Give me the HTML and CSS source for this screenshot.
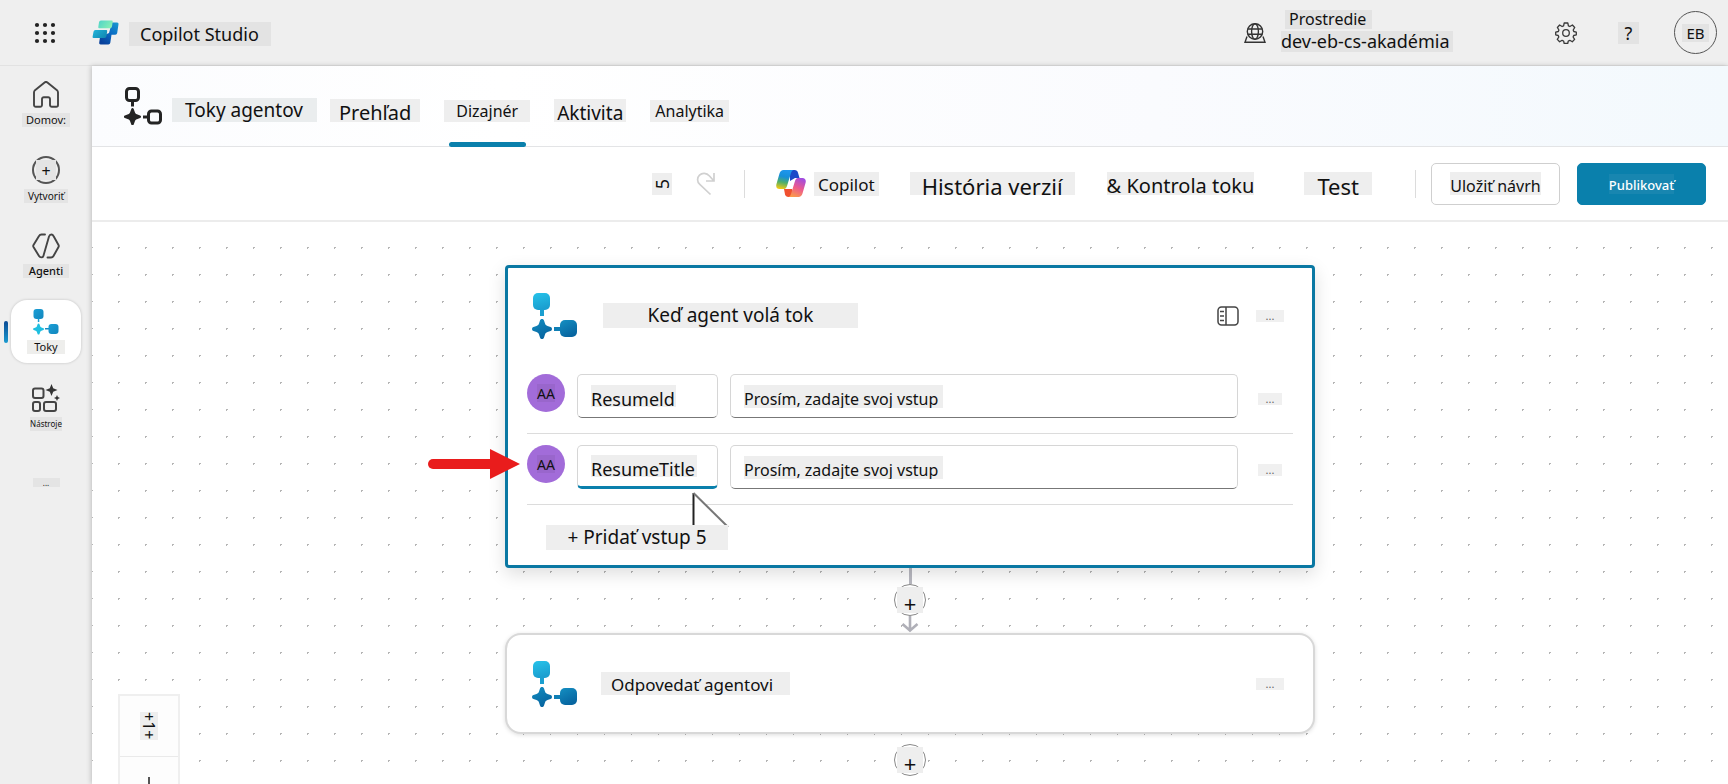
FILE: index.html
```html
<!DOCTYPE html>
<html lang="sk">
<head>
<meta charset="utf-8">
<meta name="viewport" content="width=device-width, initial-scale=1">
<title>Copilot Studio</title>
<link rel="stylesheet" href="styles.css">
</head>
<body>
<svg class="defs" aria-hidden="true">
  <defs>
    <linearGradient id="flow-light" x1="0" y1="0" x2="0.3" y2="1"><stop offset="0" stop-color="#26c3ea"/><stop offset="1" stop-color="#1b9fd0"/></linearGradient>
    <linearGradient id="flow-dark" x1="0" y1="0" x2="0.5" y2="1"><stop offset="0" stop-color="#148fc2"/><stop offset="1" stop-color="#0765a0"/></linearGradient>
    <linearGradient id="rail-blue" x1="0" y1="0" x2="1" y2="1"><stop offset="0" stop-color="#1b9fd6"/><stop offset="1" stop-color="#1286bd"/></linearGradient>
    <symbol id="flow-node" viewBox="0 0 46 46">
      <rect x="1" y="0" width="17" height="17" rx="5" fill="url(#flow-light)"/>
      <path d="M8 16h4v7H8z" fill="#1b9fd0"/>
      <path d="M22 34h7v4h-7z" fill="#0f7fb5"/>
      <rect x="28" y="27" width="17" height="17" rx="5" fill="url(#flow-dark)"/>
      <path d="M10 26c1 0 1.700.5 2 1.500l1 3c.5 1.400 1.100 2 2.500 2.500l3 1c2 .7 2 3.300 0 4l-3 1c-1.400.5-2 1.100-2.500 2.500l-1 3c-.7 2-3.300 2-4 0l-1-3c-.5-1.400-1.100-2-2.500-2.500l-3-1c-2-.7-2-3.300 0-4l3-1c1.400-.5 2-1.100 2.500-2.500l1-3c.3-1 1-1.500 2-1.500z" fill="url(#flow-dark)"/>
    </symbol>
  </defs>
</svg>

<header class="topbar">
  <button class="icon-btn waffle" aria-label="Spúšťač aplikácií">
    <svg width="22" height="22" viewBox="0 0 22 22" fill="#222"><circle cx="3" cy="3" r="2.100"/><circle cx="11" cy="3" r="2.100"/><circle cx="19" cy="3" r="2.100"/><circle cx="3" cy="11" r="2.100"/><circle cx="11" cy="11" r="2.100"/><circle cx="19" cy="11" r="2.100"/><circle cx="3" cy="19" r="2.100"/><circle cx="11" cy="19" r="2.100"/><circle cx="19" cy="19" r="2.100"/></svg>
  </button>
  <svg class="logo" width="28" height="26" viewBox="0 0 28 26">
    <defs>
      <linearGradient id="lg-a" x1="0" y1="0" x2="1" y2="0.400"><stop offset="0" stop-color="#4fd3c9"/><stop offset="1" stop-color="#84eeb6"/></linearGradient>
      <linearGradient id="lg-b" x1="0" y1="0" x2="1" y2="0.600"><stop offset="0" stop-color="#22b4da"/><stop offset="1" stop-color="#128cb4"/></linearGradient>
      <linearGradient id="lg-c" x1="1" y1="0" x2="0.300" y2="1"><stop offset="0" stop-color="#1a9bd0"/><stop offset="0.500" stop-color="#0a6cc4"/><stop offset="1" stop-color="#08419c"/></linearGradient>
    </defs>
    <path d="M20 2.500h5a1.500 1.500 0 0 1 1.500 1.800l-1.300 8.700a2 2 0 0 1-2 1.700h-3.700l-1.200 8.100a2 2 0 0 1-2 1.700H8.700a1.500 1.500 0 0 1-1.500-1.800L8 17l9-4z" fill="url(#lg-c)"/>
    <path d="M3.500 10h10.700a1 1 0 0 1 1 1.200l-.8 5.100a2 2 0 0 1-2 1.700H1.600a1 1 0 0 1-1-1.200l.9-5.100a2 2 0 0 1 2-1.700z" fill="url(#lg-b)"/>
    <path d="M9 .5h10.700a1 1 0 0 1 1 1.200l-.7 4.900A2 2 0 0 1 18 8.300H7.300a1 1 0 0 1-1-1.200L7 2.200A2 2 0 0 1 9 .5z" fill="url(#lg-a)"/>
  </svg>
  <span class="tag tall brand">Copilot Studio</span>
  <svg class="globe" width="22" height="20" viewBox="0 0 22 20" fill="none" stroke="#333" stroke-width="1.400"><circle cx="11" cy="8.500" r="7.700"/><ellipse cx="11" cy="8.500" rx="3.400" ry="7.700"/><path d="M3.800 6h14.400M3.800 11.200h14.400M3 13.500 1 19.200h20l-2-5.700"/></svg>
  <div class="env">
    <span class="tag env-label">Prostredie</span>
    <span class="tag env-name">dev-eb-cs-akadémia</span>
  </div>
  <button class="icon-btn gear" aria-label="Nastavenia">
    <svg width="22" height="22" viewBox="0 0 22 22" fill="none" stroke="#3a3a3a" stroke-width="1.300" stroke-linejoin="round"><circle cx="11" cy="11" r="3.300"/><path d="M9.200 1h3.600l.6 2.800 1.500.7 2.500-1.500 2.300 2.500-1.500 2.500.6 1.500 2.500.6v2.700l-2.600.7-.6 1.500 1.500 2.400-2.300 2.400-2.500-1.500-1.500.7-.6 2.500H9.200l-.6-2.500-1.500-.7-2.500 1.500-2.300-2.400L3.800 15l-.6-1.500-2.500-.7v-2.700l2.600-.6.6-1.500-1.500-2.500L4.600 3l2.500 1.500 1.500-.7z"/></svg>
  </button>
  <button class="tag help" aria-label="Pomocník">?</button>
  <button class="avatar"><span class="tag initials">EB</span></button>
</header>

<div class="shell">
  <nav class="rail">
    <a class="rail-item" href="#">
      <svg width="26" height="27" viewBox="0 0 26 27" fill="none" stroke="#444" stroke-width="1.900" stroke-linejoin="round"><path d="M1 11.500c0-.9.400-1.700 1-2.300L11.600 1.500a2.200 2.200 0 0 1 2.800 0L24 9.200c.6.600 1 1.400 1 2.300V24a1.800 1.800 0 0 1-1.800 1.800h-4.400A1.800 1.800 0 0 1 17 24v-6a1.800 1.800 0 0 0-1.800-1.800h-4.400A1.800 1.800 0 0 0 9 18v6a1.800 1.800 0 0 1-1.800 1.800H2.800A1.800 1.800 0 0 1 1 24z"/></svg>
      <span class="tag rail-label">Domov:</span>
    </a>
    <a class="rail-item" href="#">
      <span class="create"><span class="tag create-plus">+</span></span>
      <span class="tag rail-label small">Vytvoriť</span>
    </a>
    <a class="rail-item" href="#">
      <svg width="28" height="26" viewBox="0 0 28 26" fill="none" stroke="#444" stroke-width="1.900" stroke-linejoin="round" stroke-linecap="round"><path d="M13 1.500H9.500A3 3 0 0 0 7 3L1.500 12a2 2 0 0 0 0 2L7 23a3 3 0 0 0 2.300 1.400c1 0 1.800-.5 2.100-1.500L17 3.500c.5-1.300 1.300-2 2.300-2s1.700.5 2.200 1.500L26.500 12a2 2 0 0 1 0 2L21.500 23a3 3 0 0 1-2.500 1.500h-3.500"/></svg>
      <span class="tag rail-label strong">Agenti</span>
    </a>
    <a class="rail-item current" href="#" aria-current="page">
      <svg width="26" height="26" viewBox="0 0 26 26" fill="url(#rail-blue)"><rect x="0.500" y="0" width="10" height="10" rx="3"/><path d="M4.800 9.500h1.500V13H4.800zM12 19h4.500v1.500H12z"/><rect x="15.500" y="15" width="10" height="10" rx="3"/><path d="M5.500 14.500c.5 0 .8.300 1 .8l.7 1.900c.3.800.5 1 1.300 1.300l1.900.7c.9.300.9 1.500 0 1.800l-1.900.7c-.8.300-1 .6-1.300 1.300l-.7 1.900c-.3.900-1.600.9-1.900 0L3.900 23c-.3-.8-.6-1-1.300-1.300L.7 21c-.9-.3-.9-1.500 0-1.800l1.900-.7c.8-.3 1-.6 1.300-1.300l.7-1.900c.2-.5.5-.8.9-.8z" fill="#1fbfe0"/></svg>
      <span class="tag rail-label">Toky</span>
    </a>
    <a class="rail-item" href="#">
      <svg width="28" height="28" viewBox="0 0 28 28" fill="none" stroke="#444" stroke-width="2"><rect x="1" y="4.500" width="10.500" height="9.500" rx="2"/><rect x="1" y="18" width="7" height="9" rx="2"/><rect x="12" y="18" width="12" height="9" rx="2"/><path d="M19.500 0l1.700 4.300 4.300 1.700-4.300 1.700-1.700 4.300-1.700-4.300L13.500 6l4.300-1.700zM25 11l.9 2.100 2.100.9-2.100.9L25 17l-.9-2.100L22 14l2.100-.9z" fill="#333" stroke="none"/></svg>
      <span class="tag rail-label tiny">Nástroje</span>
    </a>
    <button class="tag rail-more" aria-label="Viac">...</button>
  </nav>

  <main class="main">
    <div class="pagehead">
      <svg width="38" height="38" viewBox="0 0 38 38" fill="none" stroke="#242424" stroke-width="3"><rect x="2.500" y="1.500" width="12" height="12" rx="3"/><path d="M8.500 13.500v6M19 30h5"/><rect x="24.500" y="24" width="12" height="12" rx="3"/><path d="M8.500 21c.6 0 1 .3 1.200 1l1.200 3.300c.4 1.100.9 1.600 2 2l3.200 1.200c1.300.5 1.300 2 0 2.500l-3.200 1.200c-1.100.4-1.600.9-2 2l-1.200 3.300c-.4 1.300-2 1.300-2.400 0l-1.200-3.300c-.4-1.100-.9-1.600-2-2L.9 31c-1.300-.5-1.300-2 0-2.500l3.200-1.200c1.100-.4 1.600-.9 2-2L7.300 22c.2-.7.6-1 1.200-1z" fill="#242424" stroke="none"/></svg>
      <h1 class="tag tall crumb">Toky agentov</h1>
      <nav class="tabs">
        <a class="tab" href="#"><span class="tag low tab-lg">Prehľad</span></a>
        <a class="tab active" href="#" aria-current="page"><span class="tag tab-sm">Dizajnér</span></a>
        <a class="tab" href="#"><span class="tag low tab-md">Aktivita</span></a>
        <a class="tab" href="#"><span class="tag tab-xs">Analytika</span></a>
      </nav>
    </div>

    <div class="toolbar">
      <button class="tag undo" aria-label="Späť"><span class="undo-glyph">5</span></button>
      <button class="icon-btn redo" aria-label="Znova"><svg width="20" height="24" viewBox="0 0 20 24" fill="none" stroke="#d0d0d0" stroke-width="1.700"><path d="M18 1v8h-8M17.500 8.500 13.500 4C10.500.7 6 .7 3.500 3.200S.8 9.500 3.800 12.300L14.500 22.500"/></svg></button>
      <span class="sep"></span>
      <button class="copilot">
        <svg width="30" height="27" viewBox="0 0 30 27">
          <defs>
            <linearGradient id="cp-a" x1="0.500" y1="0" x2="0.300" y2="1"><stop offset="0" stop-color="#1e96ee"/><stop offset="0.350" stop-color="#168fd8"/><stop offset="0.650" stop-color="#4fae6a"/><stop offset="1" stop-color="#f3c911"/></linearGradient>
            <linearGradient id="cp-b" x1="0.700" y1="0" x2="0.300" y2="1"><stop offset="0" stop-color="#a14de0"/><stop offset="0.500" stop-color="#ec5a8e"/><stop offset="1" stop-color="#fb9a4b"/></linearGradient>
          </defs>
          <path d="M14 0h4.500c2 0 3 1 3.500 2.800L23.500 8H19l-5 3z" fill="#1a49c8"/>
          <path d="M8 19h8l1.500 8h-5c-2 0-3-1-3.500-2.800z" fill="#f0502f"/>
          <path d="M7.500 0h10c-1.300.3-2 1.500-2.500 3l-4 13c-.8 2.500-1.800 3-4 3H3.500C1 19-.3 17 .4 14.200L3.500 3.500C4.200 1.200 5.500 0 7.500 0z" fill="url(#cp-a)"/>
          <path d="M22.500 27h-10c1.300-.3 2-1.500 2.500-3l4-13c.8-2.500 1.800-3 4-3h3.500c2.500 0 3.800 2 3.100 4.800L26.500 23.500c-.7 2.300-2 3.500-4 3.500z" fill="url(#cp-b)"/>
        </svg>
        <span class="tag copilot-text">Copilot</span>
      </button>
      <button class="tag low history">História verzií</button>
      <button class="tag low check">&amp; Kontrola toku</button>
      <button class="tag low test">Test</button>
      <span class="sep"></span>
      <button class="btn save"><span class="tag low btn-text">Uložiť návrh</span></button>
      <button class="btn primary"><span class="tag btn-text">Publikovať</span></button>
    </div>

    <section class="canvas">
      <article class="card selected">
        <div class="card-head">
          <svg width="46" height="46"><use href="#flow-node"/></svg>
          <h2 class="tag card-title wide">Keď agent volá tok</h2>
          <button class="icon-btn panel" aria-label="Panel"><svg width="22" height="20" viewBox="0 0 22 20" fill="none" stroke="#444" stroke-width="1.500"><rect x="1" y="1" width="20" height="18" rx="3.500"/><path d="M9 1v18M3 5.500h4M3 10h4M3 14.500h4"/></svg></button>
          <button class="tag more" aria-label="Viac možností">...</button>
        </div>
        <div class="row">
          <span class="type"><span class="tag type-text">AA</span></span>
          <label class="field name"><input class="tag low name-input short" value="Resumeld" aria-label="Názov vstupu"></label>
          <label class="field"><input class="tag low desc-input" placeholder="Prosím, zadajte svoj vstup" aria-label="Popis vstupu"></label>
          <button class="tag more" aria-label="Viac možností">...</button>
        </div>
        <div class="row">
          <span class="type"><span class="tag type-text">AA</span></span>
          <label class="field name focus"><input class="tag low name-input" value="ResumeTitle" aria-label="Názov vstupu"></label>
          <label class="field"><input class="tag low desc-input" placeholder="Prosím, zadajte svoj vstup" aria-label="Popis vstupu"></label>
          <button class="tag more" aria-label="Viac možností">...</button>
        </div>
        <button class="tag add">+ Pridať vstup 5</button>
        <svg class="pointer" width="38" height="36" viewBox="0 0 38 36"><path d="M1.500 1v33H37z" fill="#fff"/><path d="M1.500 33V1" stroke="#222" stroke-width="2"/><path d="M1.500 1 36 35" stroke="#777" stroke-width="2"/></svg>
        <svg class="arrow" width="92" height="30" viewBox="0 0 92 30" fill="#e91c1c"><rect x="0" y="10" width="70" height="10" rx="5"/><path d="M62 0v30l30-15z"/></svg>
      </article>

      <div class="link">
        <span class="line"></span>
        <button class="plus" aria-label="Pridať akciu"><span class="tag plus-text">+</span></button>
        <svg width="18" height="17" viewBox="0 0 18 17" fill="none" stroke="#b0b0b8" stroke-width="2.600"><path d="M9 0v14M1.500 8 9 14.500 16.500 8"/></svg>
      </div>

      <article class="card plain">
        <div class="card-head">
          <svg width="46" height="46"><use href="#flow-node"/></svg>
          <h2 class="tag card-title second">Odpovedať agentovi</h2>
          <button class="tag more" aria-label="Viac možností">...</button>
        </div>
      </article>
      <button class="plus last" aria-label="Pridať akciu"><span class="tag plus-text">+</span></button>

      <div class="zoom">
        <button class="zoom-btn" aria-label="Priblížiť"><span class="tag zoom-text">+1+</span></button>
        <button class="zoom-btn" aria-label="Oddialiť"><svg width="4" height="20" viewBox="0 0 4 20"><path d="M2 0v20" stroke="#555" stroke-width="2"/></svg></button>
      </div>
    </section>
  </main>
</div>
</body>
</html>
```
FILE: styles.css
```css
* { box-sizing: border-box; }

body {
  margin: 0;
  height: 100vh;
  display: flex;
  flex-direction: column;
  overflow: hidden;
  background: #efefef;
  color: #111;
  font-family: "Noto Sans", sans-serif;
}

button, input { font: inherit; color: inherit; border: 0; padding: 0; background: none; }
h1, h2 { margin: 0; font-weight: 400; }
a { color: inherit; text-decoration: none; }
svg { display: block; flex: none; }
.defs { position: absolute; width: 0; height: 0; }

/* grey plate behind a run of text */
.tag {
  display: block;
  flex: none;
  background: #eeeeee;
  line-height: 22px;
  white-space: nowrap;
  text-align: center;
}
.tag.tall { line-height: 24px; }
.tag.low { padding-top: 5px; line-height: 18px; }
.icon-btn { flex: none; }

/* top bar */
.topbar {
  display: flex;
  align-items: center;
  flex: none;
  height: 66px;
  padding: 0 11px 0 34px;
  border-bottom: 1px solid #e2e2e2;
}
.topbar .tag { background: #e3e3e3; }
.waffle { margin-right: 36px; }
.logo { margin-right: 9px; }
.brand { padding: 0 12px 0 11px; font-size: 18px; margin-top: 3px; }
.globe { margin-left: auto; margin-right: 15px; }
.env { display: flex; flex-direction: column; gap: 2px; width: 172px; margin-top: -4px; }
.env-label { align-self: flex-start; margin-left: 4px; padding: 0 6px 0 4px; font-size: 16px; line-height: 19px; }
.env-name { font-size: 18px; line-height: 21px; text-align: left; }
.gear { margin: 0 41px 0 102px; }
.help { width: 21px; font-size: 18px; margin-right: 35px; }
.avatar {
  display: flex;
  align-items: center;
  justify-content: center;
  width: 43px;
  height: 43px;
  border: 1px solid #555;
  border-radius: 50%;
}
.initials { padding: 0 4px; font-size: 15px; line-height: 18px; }

.shell { display: flex; flex: 1; min-height: 0; }

/* left rail */
.rail {
  display: flex;
  flex-direction: column;
  align-items: center;
  flex: none;
  width: 92px;
  padding-top: 6px;
}
.rail .tag { background: #e4e4e4; }
.rail-item {
  position: relative;
  display: flex;
  flex-direction: column;
  align-items: center;
  justify-content: center;
  gap: 5px;
  width: 70px;
  height: 63px;
  margin-bottom: 13px;
  border-radius: 16px;
}
.rail-label { padding: 0 4px; font-size: 11px; line-height: 14px; }
.rail-label.small { font-size: 10px; }
.rail-label.strong { padding: 0 6px; font-weight: 500; }
.rail-label.tiny { padding: 0; font-size: 8px; }
.rail-item.current { background: #fff; box-shadow: 0 0 3px #0003; }
.rail-item.current .tag { padding: 0 7px; background: #eeeeec; }
.rail-item.current::before {
  content: "";
  position: absolute;
  left: -7px;
  top: 21px;
  width: 4px;
  height: 22px;
  border-radius: 2px;
  background: linear-gradient(#0b4a94, #1b9bd0);
}
.create {
  display: flex;
  align-items: center;
  justify-content: center;
  width: 28px;
  height: 28px;
  border: 2px solid #555;
  border-radius: 50%;
}
.create-plus { width: 20px; padding-top: 2px; font-size: 16px; line-height: 18px; }
.rail-more { width: 27px; margin-top: 26px; font-size: 8px; line-height: 9px; }

/* main area */
.main {
  display: flex;
  flex-direction: column;
  flex: 1;
  min-width: 0;
  background: #fff;
  box-shadow: -1px 0 5px #0003;
}
.pagehead {
  display: flex;
  align-items: center;
  flex: none;
  height: 81px;
  padding-left: 32px;
  border-bottom: 1px solid #e3e4e6;
  background: linear-gradient(90deg, #fbfcfe, #ffffff 25%, #fafbfe 65%, #f3f9fd);
}
.crumb { margin: 7px 13px 0 10px; padding: 0 14px 0 13px; font-size: 19px; background: #eaedee; }
.tabs { display: flex; align-self: stretch; gap: 24px; }
.tab { position: relative; display: flex; align-items: center; padding-top: 9px; }
.tab.active::after {
  content: "";
  position: absolute;
  left: 5px;
  right: 4px;
  bottom: -1px;
  height: 5px;
  border-radius: 3px;
  background: #0a80ac;
}
.tab .tab-lg { padding-left: 9px; padding-right: 9px; font-size: 20px; }
.tab-sm { padding: 0 12px; font-size: 16px; }
.tab .tab-md { padding-left: 3px; padding-right: 3px; font-size: 19px; }
.tab-xs { padding: 0 5px; font-size: 16px; }

.toolbar {
  display: flex;
  align-items: center;
  justify-content: flex-end;
  flex: none;
  height: 75px;
  padding-right: 22px;
  border-bottom: 2px solid #ececec;
}
.sep { flex: none; width: 1px; height: 28px; background: #dcdcdc; }
.undo { width: 20px; font-size: 18px; }
.undo-glyph { display: inline-block; transform: rotate(-90deg); }
.redo { margin: 0 28px 0 24px; }
.copilot { display: flex; align-items: center; gap: 8px; margin: 0 31px; }
.copilot-text { padding: 2px 4px 0; font-size: 17px; }
.toolbar .history { padding-left: 12px; padding-right: 12px; margin-right: 32px; font-size: 22px; }
.check { margin-right: 50px; font-size: 20px; }
.toolbar .test { padding-left: 13px; padding-right: 13px; margin-right: 43px; font-size: 22px; }
.btn {
  display: flex;
  align-items: center;
  justify-content: center;
  flex: none;
  width: 129px;
  height: 42px;
  margin-left: 17px;
  border: 1px solid #cfcfcf;
  border-radius: 5px;
}
.btn.save { margin-left: 15px; }
.btn-text { font-size: 16px; }
.btn.primary { background: #0a80ac; border-color: #0a80ac; color: #fff; }
.btn.primary .tag { padding-top: 2px; background: #1886b0; font-size: 13px; font-weight: 500; line-height: 18px; }

/* designer canvas */
.canvas {
  position: relative;
  display: flex;
  flex-direction: column;
  align-items: center;
  flex: 1;
  min-height: 0;
  padding: 43px 20px 0;
  overflow: hidden;
  background: radial-gradient(circle, #b5b5b5 0 1px, transparent 1px) 13px 12px / 27px 27px;
}
.card { position: relative; flex: none; width: 100%; max-width: 810px; background: #fff; }
.card.selected {
  padding: 0 19px 15px;
  border: 3px solid #0a78a3;
  border-radius: 4px;
  box-shadow: 0 6px 18px #0002;
}
.card.plain {
  padding: 1px 20px;
  border: 2px solid #d8d8d8;
  border-radius: 16px;
  box-shadow: 0 1px 4px #0002;
}
.card-head { display: flex; align-items: center; height: 95px; padding-left: 5px; }
.card-title { padding: 0 11px; font-size: 19px; margin-left: 25px; }
.card-title.wide { width: 255px; line-height: 25px; }
.card-title.second { padding: 3px 17px 0 10px; margin-left: 23px; font-size: 17px; line-height: 20px; }
.card-title + * { margin-left: auto; }
.more { width: 28px; margin-right: 9px; font-size: 11px; line-height: 12px; color: #666; background: #f0f0f0; }
.panel { margin-right: 17px; }
.row {
  display: flex;
  gap: 12px;
  height: 71px;
  padding-top: 11px;
  border-bottom: 1px solid #dcdcdc;
}
.row .more { align-self: flex-start; width: 24px; margin: 19px 11px 0 8px; }
.type {
  display: flex;
  align-items: center;
  justify-content: center;
  flex: none;
  width: 38px;
  height: 38px;
  border-radius: 50%;
  background: #a26cd9;
}
.type-text { padding-top: 2px; font-size: 14px; line-height: 16px; background: #9966cc; }
.field {
  display: flex;
  align-items: center;
  flex: 1;
  height: 44px;
  padding-left: 13px;
  border: 1px solid #d6d6d6;
  border-bottom-color: #777;
  border-radius: 5px;
}
.field.name { flex: none; width: 141px; }
.field.focus { border-bottom: 3px solid #0a80ac; }
.field .tag { text-align: left; outline: 0; }
.name-input { width: 106px; font-size: 18px; height: 22px; }
.name-input.short { width: 85px; }
.desc-input { width: 199px; font-size: 16px; height: 23px; }
.desc-input::placeholder { color: #111; opacity: 1; }
.add { position: relative; z-index: 1; width: 182px; margin: 20px 0 0 19px; font-size: 19px; line-height: 25px; }
.pointer { position: absolute; left: 184px; top: 224px; pointer-events: none; }
.arrow { position: absolute; left: -80px; top: 181px; z-index: 1; }

.link { display: flex; flex-direction: column; align-items: center; }
.line { width: 3px; height: 16px; background: #b8b8c0; }
.plus {
  display: flex;
  align-items: center;
  justify-content: center;
  flex: none;
  width: 32px;
  height: 32px;
  border: 1px solid #888;
  border-radius: 50%;
  background: #fff;
}
.plus.last { margin-top: 10px; }
.plus-text { width: 26px; padding-top: 6px; font-size: 22px; line-height: 20px; }

.zoom {
  position: absolute;
  left: 26px;
  bottom: -34px;
  width: 62px;
  border: 2px solid #efefef;
  background: #fdfdfd;
}
.zoom-btn {
  display: flex;
  align-items: center;
  justify-content: center;
  width: 100%;
  height: 60px;
}
.zoom-btn + .zoom-btn { border-top: 1px solid #eaeaea; }
.zoom-text { writing-mode: vertical-rl; font-size: 16px; line-height: 18px; }
```
